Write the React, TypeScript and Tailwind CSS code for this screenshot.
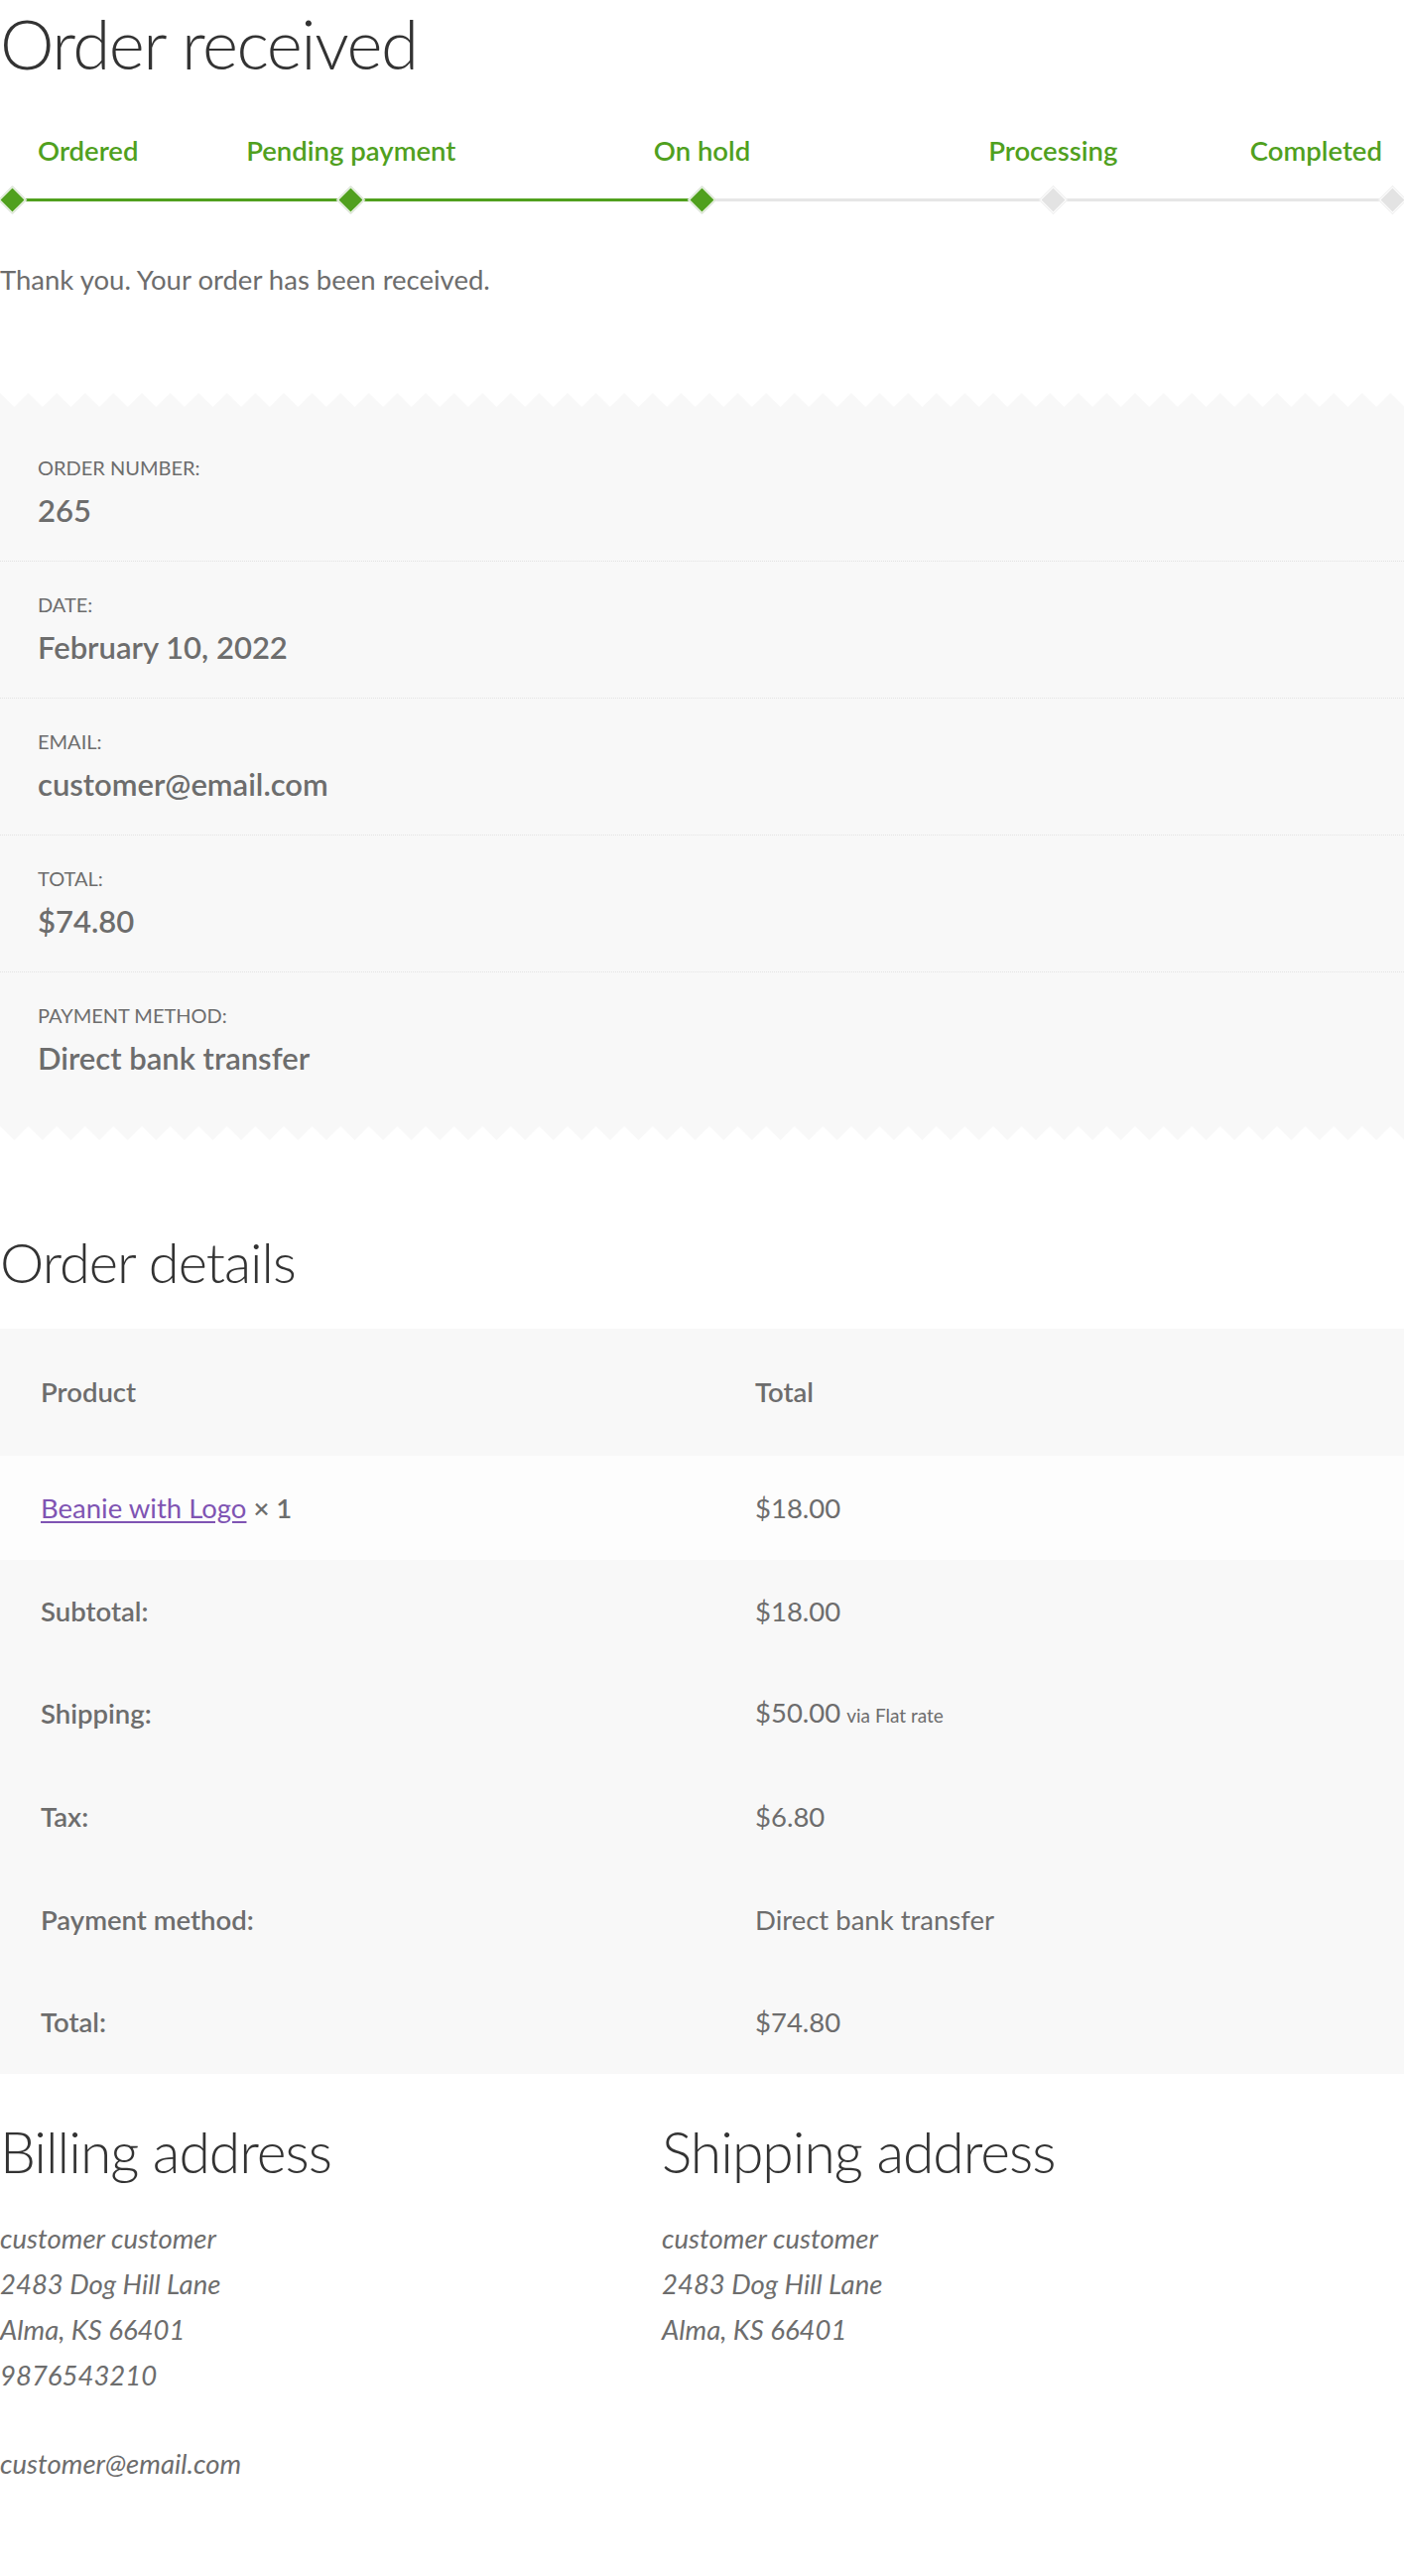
const GREEN = '#50a01e'

const STEPS = [
  { label: 'Ordered', done: true },
  { label: 'Pending payment', done: true },
  { label: 'On hold', done: true },
  { label: 'Processing', done: false },
  { label: 'Completed', done: false },
]

const OVERVIEW = [
  { label: 'Order number:', value: '265' },
  { label: 'Date:', value: 'February 10, 2022' },
  { label: 'Email:', value: 'customer@email.com' },
  { label: 'Total:', value: '$74.80' },
  { label: 'Payment method:', value: 'Direct bank transfer' },
]

const TOTALS = [
  { label: 'Subtotal:', value: '$18.00' },
  { label: 'Shipping:', value: '$50.00', note: 'via Flat rate' },
  { label: 'Tax:', value: '$6.80' },
  { label: 'Payment method:', value: 'Direct bank transfer' },
  { label: 'Total:', value: '$74.80' },
]

function Diamond({ done }: { done: boolean }) {
  return (
    <div className="relative z-10 flex items-center justify-center w-[24px] h-[24px] shrink-0">
      <div
        className={
          done
            ? 'w-[19px] h-[19px] rotate-45 border border-white ring-1 ring-[#e8e8e8] bg-[#50a01e]'
            : 'w-[19px] h-[19px] rotate-45 border border-white ring-1 ring-[#efefef] bg-[#e3e3e3]'
        }
      />
    </div>
  )
}

function Anchor({ index, children }: { index: number; children: React.ReactNode }) {
  const last = STEPS.length - 1
  const align = index === 0 ? 'justify-start' : index === last ? 'justify-end' : 'justify-center'
  return <div className={`w-0 flex ${align}`}>{children}</div>
}

function StepProgress() {
  return (
    <div className="w-full">
      {/* labels */}
      <div className="flex mt-[54px] h-[36px] leading-[36px]">
        {STEPS.map((s, i) => (
          <div key={s.label} className="contents">
            <Anchor index={i}>
              <span
                className={
                  i === 0
                    ? 'pl-[38px] whitespace-nowrap text-[27.5px] font-semibold'
                    : i === STEPS.length - 1
                      ? 'pr-[22px] whitespace-nowrap text-[27.5px] font-semibold'
                      : 'whitespace-nowrap text-[27.5px] font-semibold'
                }
                style={{ color: GREEN }}
              >
                {s.label}
              </span>
            </Anchor>
            {i < STEPS.length - 1 && <div className="flex-1" />}
          </div>
        ))}
      </div>

      {/* track */}
      <div className="flex items-center mt-[17px] h-[28px]">
        {STEPS.map((s, i) => (
          <div key={s.label} className="contents">
            <Anchor index={i}>
              <Diamond done={s.done} />
            </Anchor>
            {i < STEPS.length - 1 && (
              <div className={STEPS[i + 1].done ? 'flex-1 h-[3px] bg-[#50a01e]' : 'flex-1 h-[3px] bg-[#e6e6e6]'} />
            )}
          </div>
        ))}
      </div>
    </div>
  )
}

function Zigzag({ id, flip }: { id: string; flip?: boolean }) {
  return (
    <svg className="block w-full h-[14px]" aria-hidden="true">
      <defs>
        <pattern id={id} width="28.6" height="14" patternUnits="userSpaceOnUse">
          <path d={flip ? 'M0 0 L14.3 14 L28.6 0 Z' : 'M0 0 L14.3 14 L28.6 0 V14 H0 Z'} fill="#f8f8f8" />
        </pattern>
      </defs>
      <rect width="100%" height="14" fill={`url(#${id})`} />
    </svg>
  )
}

function OrderOverview() {
  return (
    <div className="mt-[91px]">
      <Zigzag id="zz-top" />
      <ul className="bg-[#f8f8f8] pt-[18px] pb-[17px] m-0 list-none">
        {OVERVIEW.map((row, i) => (
          <li
            key={row.label}
            className={
              i < OVERVIEW.length - 1
                ? 'h-[138px] px-[38px] pt-[27px] border-b border-dotted border-[#e3e3e3]'
                : 'h-[138px] px-[38px] pt-[27px]'
            }
          >
            <div className="text-[20px] leading-[32px] uppercase">{row.label}</div>
            <div className="mt-[5px] text-[31px] leading-[44px] font-semibold">{row.value}</div>
          </li>
        ))}
      </ul>
      <Zigzag id="zz-bottom" flip />
    </div>
  )
}

function OrderDetails() {
  return (
    <section>
      <h2 className="mt-[90px] text-[56px] leading-[66px] font-light tracking-[-1px] text-[#333333]">Order details</h2>
      <table className="mt-[34px] w-full border-collapse text-[27.5px] leading-[46px]">
        <thead>
          <tr className="bg-[#f8f8f8] h-[128px]">
            <th className="w-[720px] pl-[41px] text-left font-semibold">Product</th>
            <th className="pl-[41px] text-left font-semibold">Total</th>
          </tr>
        </thead>
        <tbody>
          <tr className="bg-[#fdfdfd] h-[105px]">
            <td className="pl-[41px]">
              <a href="#" className="text-[#7f54b3] underline underline-offset-[3px]">Beanie with Logo</a>{' '}
              <strong className="font-semibold">× 1</strong>
            </td>
            <td className="pl-[41px]">$18.00</td>
          </tr>
        </tbody>
        <tfoot>
          {TOTALS.map(r => (
            <tr key={r.label} className="bg-[#f8f8f8] h-[103.6px]">
              <th className="pl-[41px] text-left font-semibold">{r.label}</th>
              <td className="pl-[41px]">
                {r.value}
                {r.note && <small className="ml-[6px] text-[19px]">{r.note}</small>}
              </td>
            </tr>
          ))}
        </tfoot>
      </table>
    </section>
  )
}

function Address({ title, lines, email }: { title: string; lines: string[]; email?: string }) {
  return (
    <div>
      <h2 className="mt-[45px] text-[57px] leading-[66px] font-light tracking-[-1px] text-[#333333]">{title}</h2>
      <address className="mt-[32px] italic text-[27.5px] leading-[46px]">
        {lines.map(l => (
          <div key={l}>{l}</div>
        ))}
        {email && <p className="mt-[43px]">{email}</p>}
      </address>
    </div>
  )
}

export default function App() {
  return (
    <div className="w-[1415px] min-h-[2596px] bg-white text-[#6d6d6d] [font-family:Lato,'Open_Sans',sans-serif] pt-[8px]">
      <h1 className="text-[69px] leading-[72px] font-light tracking-[-1.5px] text-[#333333]">Order received</h1>

      <StepProgress />

      <p className="mt-[44px] text-[27.5px] leading-[46px]">Thank you. Your order has been received.</p>

      <OrderOverview />

      <OrderDetails />

      <div className="flex">
        <div className="w-[667px] shrink-0">
          <Address
            title="Billing address"
            lines={['customer customer', '2483 Dog Hill Lane', 'Alma, KS 66401', '9876543210']}
            email="customer@email.com"
          />
        </div>
        <div className="flex-1">
          <Address title="Shipping address" lines={['customer customer', '2483 Dog Hill Lane', 'Alma, KS 66401']} />
        </div>
      </div>
    </div>
  )
}
